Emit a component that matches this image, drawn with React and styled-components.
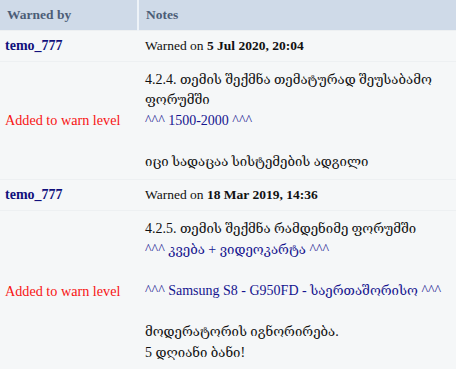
import React from 'react';
import styled, { createGlobalStyle } from 'styled-components';

const GlobalStyle = createGlobalStyle`
  html, body {
    margin: 0;
    padding: 0;
    background: #f5f7f8;
  }
  body {
    font-family: "Liberation Serif", "DejaVu Serif", "DejaVu Sans", serif;
    font-size: 13.5px;
    color: #111;
  }
`;

const Table = styled.table`
  width: 100%;
  border-collapse: collapse;
  table-layout: fixed;
  background: #f5f7f8;
  font-size: 13.5px;
`;

const HeadCell = styled.th`
  box-sizing: border-box;
  width: ${({ $width }) => ($width ? `${$width}px` : 'auto')};
  height: 30px;
  padding: 0 7px;
  background: #cfdae8;
  color: #4c5d77;
  font-weight: bold;
  text-align: left;
  border-right: ${({ $divider }) => ($divider ? '2px solid #eef3f8' : 'none')};
`;

const Row = styled.tr`
  border-top: 1px solid #edf0f2;
`;

const Cell = styled.td`
  padding: ${({ $tall }) => ($tall ? '8px 5px 7px' : '5px 5px')};
  padding-left: ${({ $notes }) => ($notes ? '7px' : '5px')};
  vertical-align: middle;
  white-space: nowrap;
  line-height: ${({ $tall }) => ($tall ? '20.6px' : '20px')};
  font-size: ${({ $tall }) => ($tall ? '14px' : '13.5px')};
`;

const User = styled.span`
  color: #10107c;
  font-weight: bold;
  font-size: 14px;
`;

const Added = styled.span`
  color: #f81414;
  font-size: 14.2px;
`;

const Quote = styled.span`
  color: #15158f;
`;

const Geo = styled.span`
  font-size: 13.2px;
`;

const warnings = [
  {
    user: 'temo_777',
    date: '5 Jul 2020, 20:04',
    notes: [
      { text: '4.2.4. თემის შექმნა თემატურად შეუსაბამო' },
      { text: 'ფორუმში' },
      { text: '^^^ 1500-2000 ^^^', quote: true },
      { text: '' },
      { text: 'იცი სადაცაა სისტემების ადგილი' },
    ],
  },
  {
    user: 'temo_777',
    date: '18 Mar 2019, 14:36',
    notes: [
      { text: '4.2.5. თემის შექმნა რამდენიმე ფორუმში' },
      { text: '^^^ კვება + ვიდეოკარტა ^^^', quote: true },
      { text: '' },
      { text: '^^^ Samsung S8 - G950FD - საერთაშორისო ^^^', quote: true },
      { text: '' },
      { text: 'მოდერატორის იგნორირება.' },
      { text: '5 დღიანი ბანი!' },
    ],
  },
];

// georgian runs get their own size, the fallback font draws them wider
const withGeo = (text) =>
  text
    .split(/([\u10A0-\u10FF]+(?:\s+[\u10A0-\u10FF]+)*)/)
    .map((part, i) =>
      /[\u10A0-\u10FF]/.test(part) ? <Geo key={i}>{part}</Geo> : part
    );

const NoteLines = ({ notes }) =>
  notes.map((n, i) => (
    <React.Fragment key={i}>
      {n.quote ? <Quote>{withGeo(n.text)}</Quote> : withGeo(n.text)}
      {i < notes.length - 1 && <br />}
    </React.Fragment>
  ));

export default function App() {
  return (
    <>
      <GlobalStyle />
      <Table>
        <thead>
          <tr>
            <HeadCell $width={138} $divider>
              Warned by
            </HeadCell>
            <HeadCell>Notes</HeadCell>
          </tr>
        </thead>
        <tbody>
          {warnings.map((w, i) => (
            <React.Fragment key={i}>
              <Row>
                <Cell>
                  <User>{w.user}</User>
                </Cell>
                <Cell $notes>
                  Warned on <b>{w.date}</b>
                </Cell>
              </Row>
              <Row>
                <Cell $tall>
                  <Added>Added to warn level</Added>
                </Cell>
                <Cell $tall $notes>
                  <NoteLines notes={w.notes} />
                </Cell>
              </Row>
            </React.Fragment>
          ))}
        </tbody>
      </Table>
    </>
  );
}
